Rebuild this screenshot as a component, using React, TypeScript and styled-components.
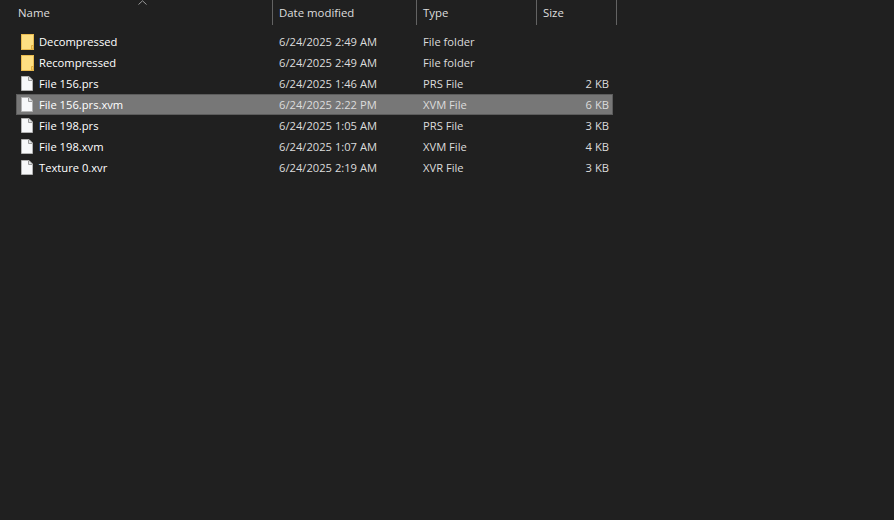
import React from 'react';
import styled, { createGlobalStyle } from 'styled-components';

const GlobalStyle = createGlobalStyle`
  html, body {
    margin: 0;
    padding: 0;
    background: #202020;
  }
`;

const Page = styled.div`
  width: 894px;
  height: 520px;
  background: #202020;
  overflow: hidden;
  font-family: "Open Sans", Roboto, sans-serif;
  font-size: 11.2px;
  color: #fff;
`;

const Header = styled.div`
  position: relative;
  display: flex;
  height: 25px;
  margin-bottom: 6px;
`;

const SortCaret = styled.svg`
  position: absolute;
  left: 138px;
  top: 0;
`;

const HeaderCell = styled.div<{ $w: number }>`
  width: ${(p) => p.$w}px;
  box-sizing: border-box;
  padding: 5px 0 0 6px;
  border-right: 1px solid #636363;
  color: #dedede;
  font-size: 11.4px;
  line-height: 16px;
  &:first-child {
    padding-left: 18px;
  }
`;

const Row = styled.div<{ $selected?: boolean }>`
  display: flex;
  align-items: center;
  box-sizing: border-box;
  width: 597px;
  height: 21px;
  margin-left: 16px;
  border: 1px solid ${(p) => (p.$selected ? '#5c5c5c' : 'transparent')};
  background: ${(p) => (p.$selected ? '#777777' : 'transparent')};
`;

const NameCell = styled.div`
  display: flex;
  align-items: center;
  width: 262px;
  padding-left: 4px;
  box-sizing: border-box;
`;

const IconSlot = styled.div`
  display: flex;
  width: 18px;
  flex: none;
`;

const Cell = styled.div<{ $w: number }>`
  width: ${(p) => p.$w}px;
  color: #dcdcdc;
  white-space: nowrap;
`;

const SizeCell = styled(Cell)`
  text-align: right;
`;

const FolderIcon = () => (
  <svg width="13" height="16" viewBox="0 0 13 16">
    <rect x="0.5" y="0.5" width="12" height="15" fill="#fedf82" stroke="#e9bb50" />
    <path d="M10.5 15V11.5H12.5V15Z" fill="#f7cf68" stroke="#e0ae42" />
  </svg>
);

const FileIcon = () => (
  <svg width="12" height="15" viewBox="0 0 12 15">
    <path d="M0.5 0.5H8L11.5 4V14.5H0.5Z" fill="#f7f8fa" stroke="#b2b2b2" />
    <path d="M7.5 1V4.5H11" fill="#dfe1e4" stroke="#9a9a9a" />
  </svg>
);

const rows = [
  { name: 'Decompressed', date: '6/24/2025 2:49 AM', type: 'File folder', size: '', folder: true },
  { name: 'Recompressed', date: '6/24/2025 2:49 AM', type: 'File folder', size: '', folder: true },
  { name: 'File 156.prs', date: '6/24/2025 1:46 AM', type: 'PRS File', size: '2 KB' },
  { name: 'File 156.prs.xvm', date: '6/24/2025 2:22 PM', type: 'XVM File', size: '6 KB', selected: true },
  { name: 'File 198.prs', date: '6/24/2025 1:05 AM', type: 'PRS File', size: '3 KB' },
  { name: 'File 198.xvm', date: '6/24/2025 1:07 AM', type: 'XVM File', size: '4 KB' },
  { name: 'Texture 0.xvr', date: '6/24/2025 2:19 AM', type: 'XVR File', size: '3 KB' },
];

const App: React.FC = () => {
  return (
    <Page>
      <GlobalStyle />
      <Header>
        <HeaderCell $w={273}>Name</HeaderCell>
        <HeaderCell $w={144}>Date modified</HeaderCell>
        <HeaderCell $w={120}>Type</HeaderCell>
        <HeaderCell $w={80}>Size</HeaderCell>
        <SortCaret width="9" height="5" viewBox="0 0 9 5">
          <path d="M0.5 4.5L4.5 0.8L8.5 4.5" fill="none" stroke="#9a9a9a" />
        </SortCaret>
      </Header>
      {rows.map((r) => (
        <Row key={r.name} $selected={r.selected}>
          <NameCell>
            <IconSlot>{r.folder ? <FolderIcon /> : <FileIcon />}</IconSlot>
            <span>{r.name}</span>
          </NameCell>
          <Cell $w={144}>{r.date}</Cell>
          <Cell $w={120}>{r.type}</Cell>
          <SizeCell $w={66}>{r.size}</SizeCell>
        </Row>
      ))}
    </Page>
  );
};

export default App;
